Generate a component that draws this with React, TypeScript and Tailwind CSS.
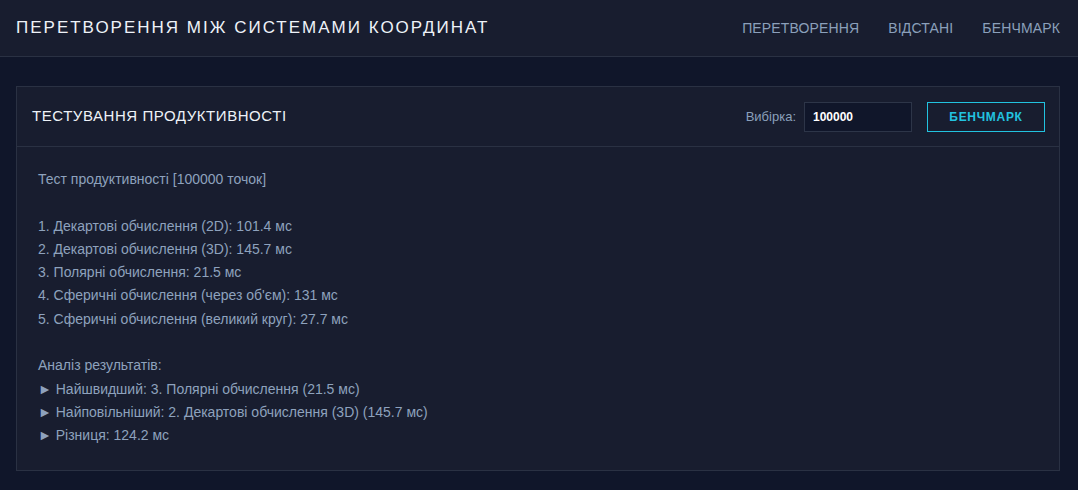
const lines = [
  "Тест продуктивності [100000 точок]",
  "",
  "1. Декартові обчислення (2D): 101.4 мс",
  "2. Декартові обчислення (3D): 145.7 мс",
  "3. Полярні обчислення: 21.5 мс",
  "4. Сферичні обчислення (через об'єм): 131 мс",
  "5. Сферичні обчислення (великий круг): 27.7 мс",
  "",
  "Аналіз результатів:",
  "► Найшвидший: 3. Полярні обчислення (21.5 мс)",
  "► Найповільніший: 2. Декартові обчислення (3D) (145.7 мс)",
  "► Різниця: 124.2 мс",
];

export default function App() {
  return (
    <div className="min-h-[490px] bg-[#10162a] font-['Liberation_Sans',Arial,sans-serif]">
      <header className="flex h-[57px] items-center justify-between border-b border-[#2a3143] bg-[#181d2f] pl-4 pr-[18px]">
        <h1 className="text-[17px] tracking-[2px] text-[#eef2f8]">
          ПЕРЕТВОРЕННЯ МІЖ СИСТЕМАМИ КООРДИНАТ
        </h1>
        <nav className="flex gap-[29px] text-[14px] tracking-[0.15px] text-[#8ba0bb]">
          <a>ПЕРЕТВОРЕННЯ</a>
          <a>ВІДСТАНІ</a>
          <a>БЕНЧМАРК</a>
        </nav>
      </header>

      <main className="pl-4 pr-[18px] pt-[29px]">
        <section className="border border-[#2a3143] bg-[#181d2f]">
          <div className="flex h-[60px] items-center justify-between border-b border-[#2a3143] pl-[15px] pr-[14px]">
            <h2 className="text-[15px] tracking-[0.55px] text-[#eef2f8]">
              ТЕСТУВАННЯ ПРОДУКТИВНОСТІ
            </h2>
            <div className="flex items-center">
              <span className="mr-2 text-[13px] text-[#8ba0bb]">Вибірка:</span>
              <input
                defaultValue="100000"
                className="h-[30px] w-[108px] border border-[#2d3548] bg-[#10162a] px-2 text-[12px] font-bold text-white outline-none"
              />
              <button className="ml-[15px] h-[30px] w-[118px] border border-[#22c3e0] text-[12px] font-bold tracking-[0.7px] text-[#22c3e0]">
                БЕНЧМАРК
              </button>
            </div>
          </div>
          <div className="px-[21px] pt-[21px] pb-[22px] text-[14px] leading-[23.3px] text-[#8ea2bd]">
            {lines.map((l, i) => (
              <div key={i} className="h-[23.3px] whitespace-pre">
                {l}
              </div>
            ))}
          </div>
        </section>
      </main>
    </div>
  );
}
